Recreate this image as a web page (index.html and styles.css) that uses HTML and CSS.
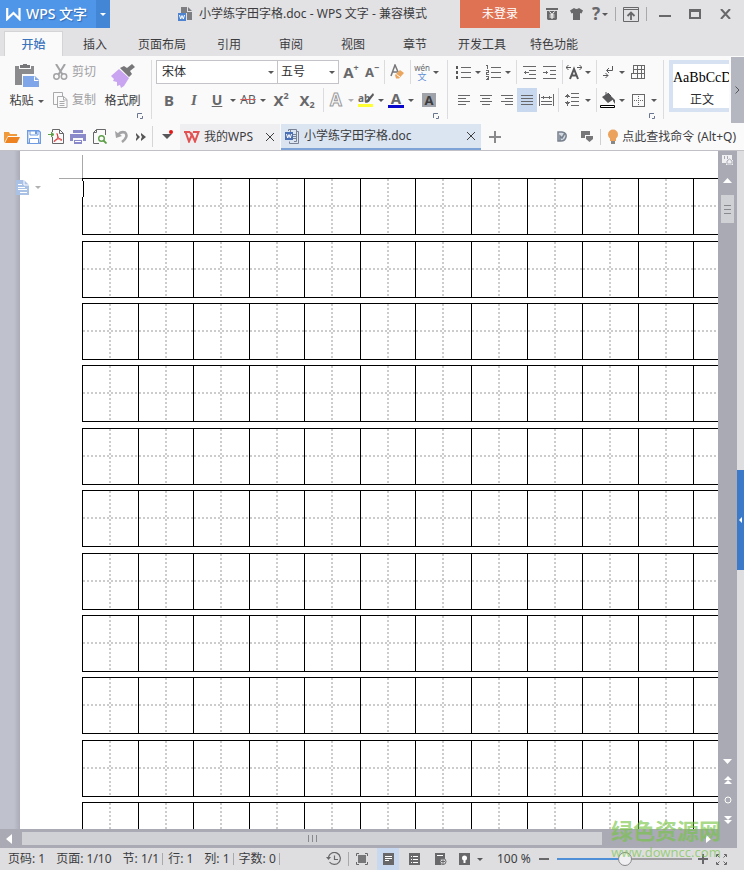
FILE: index.html
```html
<!DOCTYPE html>
<html lang="zh-CN">
<head>
<meta charset="utf-8">
<title>小学练字田字格.doc - WPS 文字</title>
<link rel="stylesheet" href="styles.css">
</head>
<body>
<header class="titlebar">
  <button class="brand"><svg width="15" height="13" viewBox="0 0 15 13"><path d="M1.200 0v11L7.500 5l6 6V0" fill="none" stroke="#fff" stroke-width="2.200"/></svg>WPS 文字</button>
  <button class="brand-menu" aria-label="菜单"><i class="caret"></i></button>
  <div class="doc-title">
    <svg width="15" height="14" viewBox="0 0 15 14"><path d="M3 0h6v5h5v8H9V6H3zM10 0l4 4h-4z" fill="#7d7e82"/><path d="M0 6h8v8H0z" fill="#4d83cf"/><path d="M1.500 8l1.200 4L4 8.500 5.300 12 6.500 8" fill="none" stroke="#fff"/></svg>
    <span>小学练字田字格.doc - WPS 文字 - 兼容模式</span>
  </div>
  <button class="login">未登录</button>
  <div class="window-tools">
    <button class="w24" aria-label="积分"><svg width="12" height="12" viewBox="0 0 12 12"><path d="M0 0h12v2H0zM1 3h10v8l-1 1H2l-1-1z" fill="#68686b"/><path d="M3.500 3.500L6 6.500l2.500-3M6 6v5M3.500 7h5M3.500 9h5" fill="none" stroke="#fff"/></svg></button>
    <button class="w24" aria-label="皮肤"><svg width="13" height="12" viewBox="0 0 13 12"><path d="M4 0q2.500 2 5 0l4 2.500-1.500 3L10 5v7H3V5l-1.500.5L0 2.500z" fill="#68686b"/></svg></button>
    <button class="w24 help" aria-label="帮助">?<i class="caret"></i></button>
    <i class="bar"></i>
    <button class="w24" aria-label="功能区"><svg width="16" height="15" viewBox="0 0 16 15" fill="none" stroke="#68686b"><path d="M.5.5h15v14H.5zM0 2.500h16"/><path d="M8 13V6M4.500 9L8 5.500 11.500 9" stroke-width="1.800"/></svg></button>
    <i class="bar"></i>
    <button class="w30" aria-label="最小化"><svg width="12" height="12"><path d="M0 7h12v2H0z" fill="#68686b"/></svg></button>
    <button class="w30" aria-label="最大化"><svg width="12" height="10"><path d="M1 2h10v7H1zM0 1h12" fill="none" stroke="#68686b" stroke-width="2"/></svg></button>
    <button class="w30" aria-label="关闭"><svg width="11" height="10"><path d="M1 0l9 10M10 0L1 10" stroke="#68686b" stroke-width="2"/></svg></button>
  </div>
</header>

<nav class="menu">
  <button class="active">开始</button><button>插入</button><button class="wide">页面布局</button><button>引用</button><button>审阅</button><button>视图</button><button>章节</button><button class="wide">开发工具</button><button class="wide">特色功能</button>
</nav>

<section class="ribbon">
  <div class="group clipboard">
    <button class="big">
      <svg width="26" height="24" viewBox="0 0 26 24"><path d="M1 2h4v3h12V2h3v8H8v11H1z" fill="#8b8b8e"/><path d="M6 1h3V0h4v1h3v3H6z" fill="#77777a"/><path d="M9 12h12l4 4v7H9z" fill="#7fa6e8"/><path d="M20 12v5h5z" fill="#fff"/><path d="M21 13v3h4z" fill="#7fa6e8"/></svg>
      <span>粘贴<i class="caret"></i></span>
    </button>
    <div class="stack">
      <button><svg width="15" height="16" viewBox="0 0 15 16" fill="none" stroke="#a3a3a6"><path d="M3 0l6.500 10.500M12 0L5.500 10.500" stroke-width="2"/><circle cx="3.500" cy="12.500" r="2.700" stroke-width="1.500"/><circle cx="11" cy="12.500" r="2.700" stroke-width="1.500"/></svg>剪切</button>
      <button><svg width="15" height="16" viewBox="0 0 15 16" fill="none" stroke="#aaaaad"><path d="M4 12.500H.5V.5h9V4"/><path d="M4.500 4.500h6l3.500 3v8H4.500zM10.500 4.500v3.500H14M6.500 9.500h5M6.500 11.500h5M6.500 13.500h5"/></svg>复制</button>
    </div>
    <button class="big">
      <svg width="24" height="24" viewBox="0 0 24 24"><path d="M8 5l10 9-5 8-3 2-1-3-3 1 0-4-4-1 1-2-3-3z" fill="#c9a4f0"/><path d="M9 4l9 9 3-3-2-3 5-4-3-3-5 4-3-2z" fill="#77777a"/></svg>
      <span>格式刷</span>
    </button>
    <svg class="launch" width="6" height="6"><path d="M.5 5V.5H5M3 5.500h2.500V3" fill="none" stroke="#68768f"/></svg>
  </div>

  <div class="group font">
    <div class="row">
      <label class="pick family"><select aria-label="字体"><option>宋体</option></select><i class="caret"></i></label>
      <label class="pick size"><select aria-label="字号"><option>五号</option></select><i class="caret"></i></label>
      <button class="w24 glyph" aria-label="增大字号">A<sup>+</sup></button>
      <button class="w18 glyph small" aria-label="减小字号">A<sup>−</sup></button>
      <i class="sep"></i>
      <button class="w20" aria-label="清除格式"><svg width="15" height="16" viewBox="0 0 15 16"><path d="M1 12L5 1l3.500 8M2.500 8H7" fill="none" stroke="#77777a" stroke-width="1.500"/><path d="M5 11l5-5 4 3-5 5.500-3 0z" fill="#eba55c"/><path d="M6.500 10.500l3.500 2.500" stroke="#fff"/></svg></button>
      <i class="sep"></i>
      <button class="w18 pinyin" aria-label="拼音指南"><span>wén</span><b>文</b></button>
      <button class="w10" aria-label="拼音选项"><i class="caret"></i></button>
    </div>
    <div class="row">
      <button class="w26 glyph">B</button>
      <button class="w24 glyph italic">I</button>
      <button class="w22 glyph under">U</button>
      <button class="w10" aria-label="下划线样式"><i class="caret"></i></button>
      <button class="w20 strike">AB</button>
      <button class="w10" aria-label="删除线样式"><i class="caret"></i></button>
      <button class="w26 glyph">X<sup>2</sup></button>
      <button class="w26 glyph">X<sub>2</sub></button>
      <i class="sep"></i>
      <button class="w20 outline">A</button>
      <button class="w10" aria-label="文字效果"><i class="caret pale"></i></button>
      <button class="w20" aria-label="突出显示"><svg class="mark" width="16" height="16" viewBox="0 0 16 16"><text x="0" y="10">ab</text><path d="M15 1L8 9l-1 2 3-.5L16 3z" fill="#5b5b5e"/><path d="M0 12h15v3H0z" fill="#ff3"/></svg></button>
      <button class="w10" aria-label="突出颜色"><i class="caret"></i></button>
      <button class="ink">A</button>
      <button class="w10" aria-label="字体颜色"><i class="caret"></i></button>
      <button class="w26"><span class="shade">A</span></button>
    </div>
    <svg class="launch" width="6" height="6"><path d="M.5 5V.5H5M3 5.500h2.500V3" fill="none" stroke="#68768f"/></svg>
  </div>

  <div class="group para">
    <div class="row">
      <button class="w20" aria-label="项目符号"><svg class="line" width="15" height="13"><path d="M5 1.500h10M5 6.500h10M5 11.500h10"/><path d="M0 0h2v3H0zM0 5h2v3H0zM0 10h2v3H0z" fill="#58585b" stroke="none"/></svg></button>
      <button class="w10" aria-label="符号样式"><i class="caret"></i></button>
      <button class="w20" aria-label="编号"><svg class="line" width="15" height="15"><path d="M5 2.500h10M5 7.500h10M5 12.500h10M0 .5h1.500V4M0 5.500h2.500v2H.5v2H3M0 11.500h2.500v3H0M1 13h1"/></svg></button>
      <button class="w10" aria-label="编号样式"><i class="caret"></i></button>
      <i class="sep"></i>
      <button class="w20" aria-label="减少缩进"><svg class="line" width="13" height="13"><path d="M0 .5h13M6 4.500h7M6 8.500h7M0 12.500h13M1 6.500h5M2.500 5v3"/></svg></button>
      <button class="w20" aria-label="增加缩进"><svg class="line" width="13" height="13"><path d="M0 .5h13M7 4.500h6M7 8.500h6M0 12.500h13M0 6.500h5M3.500 5v3"/></svg></button>
      <i class="sep"></i>
      <button class="w18" aria-label="中文版式"><svg width="16" height="15" viewBox="0 0 16 15" fill="none" stroke="#58585b"><path d="M4 14L8 4l4 10M5.500 10.500h5" stroke-width="2"/><path d="M0 2.500h5M2.500 0L0 2.500 2.500 5M11 2.500h5M13.500 0L16 2.500 13.500 5"/></svg></button>
      <button class="w10" aria-label="版式选项"><i class="caret"></i></button>
      <i class="sep"></i>
      <button class="w18" aria-label="显示标记"><svg width="11" height="13" viewBox="0 0 11 13" fill="none" stroke="#58585b"><path d="M9.500 0v4.500H4M6 2L3.500 4.500 6 7M0 9.500h5M2.500 7L5 9.500 2.500 12"/></svg></button>
      <button class="w10" aria-label="标记选项"><i class="caret"></i></button>
      <button class="w22" aria-label="表格"><svg class="line" width="14" height="14"><path d="M2.500.5h11v13H.5v-5M2.500 0v9M6.500 0v14M10.500 0v14M2 4.500h12M0 8.500h14"/></svg></button>
    </div>
    <div class="row">
      <button class="w22" aria-label="左对齐"><svg class="line" width="12" height="11"><path d="M0 .5h12M0 3.500h8M0 6.500h12M0 9.500h8"/></svg></button>
      <button class="w22" aria-label="居中"><svg class="line" width="12" height="11"><path d="M0 .5h12M2 3.500h8M0 6.500h12M2 9.500h8"/></svg></button>
      <button class="w20" aria-label="右对齐"><svg class="line" width="12" height="11"><path d="M0 .5h12M4 3.500h8M0 6.500h12M4 9.500h8"/></svg></button>
      <button class="w20 on" aria-label="两端对齐"><svg class="line" width="12" height="11"><path d="M0 .5h12M0 3.500h12M0 6.500h12M0 9.500h12"/></svg></button>
      <button class="w18" aria-label="分散对齐"><svg class="line" width="15" height="12"><path d="M.5 0v12M14.500 0v12M2 3.500h11M4.500 2v3M10.500 2v3M2 7.500h11M2 10.500h11"/></svg></button>
      <i class="sep"></i>
      <button class="w22" aria-label="行距"><svg class="line" width="14" height="14"><path d="M6 .5h8M6 4.500h8M6 8.500h8M6 12.500h8M2.500 1v4M2.500 8v5M1 2.500h3M0 3.500h5M0 9.500h5M1 10.500h3"/></svg></button>
      <button class="w10" aria-label="行距选项"><i class="caret"></i></button>
      <i class="sep"></i>
      <button class="w18" aria-label="底纹"><svg width="16" height="16" viewBox="0 0 16 16"><path d="M2 5l6-4 6 6-6 4zM13 6l2 2v4l-2-3z" fill="#58585b"/><path d="M6 0v4M8 1l3 3" stroke="#58585b"/><path d="M.5 13.500h14v2H.5z" fill="#fff" stroke="#000"/></svg></button>
      <button class="w10" aria-label="底纹颜色"><i class="caret"></i></button>
      <button class="w22" aria-label="边框"><svg class="line" width="13" height="13"><path d="M.5.5h12v12H.5z"/><path d="M6.500 2v9M2 6.500h9" stroke-dasharray="1 1"/></svg></button>
      <button class="w10" aria-label="边框样式"><i class="caret"></i></button>
    </div>
    <svg class="launch" width="6" height="6"><path d="M.5 5V.5H5M3 5.500h2.500V3" fill="none" stroke="#68768f"/></svg>
  </div>

  <div class="styles"><button><b>AaBbCcD</b><span>正文</span></button></div>
  <button class="more" aria-label="更多"><svg width="5" height="8"><path d="M.5.5L4 4 .5 7.500" fill="none" stroke="#55565c"/></svg></button>
</section>

<section class="quick">
  <div class="quick-icons">
    <button aria-label="打开"><svg width="16" height="14" viewBox="0 0 16 14"><path d="M0 13V2h5l1 2h7v2H4z" fill="#f09a3c"/><path d="M4 7h12l-3 6H1z" fill="#ee8322"/></svg></button>
    <button aria-label="保存"><svg width="14" height="14" viewBox="0 0 14 14"><path d="M.7.7h11l1.600 1.600v11H.7z" fill="#fff" stroke="#6f9be0" stroke-width="1.400"/><path d="M3 1h8v4H3zM2.500 8.500h9v5h-9z" fill="#fff" stroke="#6f9be0"/><path d="M8 1h2v3H8z" fill="#6f9be0"/></svg></button>
    <button aria-label="输出PDF"><svg width="16" height="15" viewBox="0 0 16 15"><path d="M4.500 3V.5h7l4 4v10h-11V8M11.500.5v4h4" fill="none" stroke="#68686b"/><path d="M0 5.500h4M3 3l3 2.500L3 8" fill="#5f9f4a" stroke="#5f9f4a"/><path d="M9 4.500c2 4-1 8-3 8 0-2 7-4 8-1.500-1 1.500-4-2-5-6.500z" fill="none" stroke="#dc3c3c"/></svg></button>
    <button aria-label="打印"><svg width="16" height="14" viewBox="0 0 16 14"><path d="M3 0h10v3H3zM0 4h16v7h-3V8H3v3H0zM4 10h8v4H4z" fill="#8a8acb"/><path d="M5 11.500h6" stroke="#fff"/></svg></button>
    <button aria-label="打印预览"><svg width="14" height="15" viewBox="0 0 14 15"><path d="M12.500 6V.5H3.500l-3 3v11H6M.5 3.500h3v-3" fill="none" stroke="#68686b"/><circle cx="8.500" cy="9.500" r="2.800" fill="none" stroke="#5f9f4a" stroke-width="1.400"/><path d="M10.500 11.500l3 3" stroke="#5f9f4a" stroke-width="1.800"/></svg></button>
    <button aria-label="撤销"><svg width="14" height="13" viewBox="0 0 14 13"><path d="M3 5q3-4 7-2.500 4 4-3 9.500" fill="none" stroke="#a3a3a6" stroke-width="2.600"/><path d="M0 1l1 7 6-2z" fill="#a3a3a6"/></svg></button>
    <button class="tight" aria-label="更多命令"><svg width="10" height="8"><path d="M0 0l4 4-4 4V6l1-2-1-2zM5 0l5 4-5 4V6l1-2-1-2z" fill="#555"/></svg></button>
  </div>
  <button class="recent" aria-label="历史"><i class="caret large"></i><i class="dot"></i></button>
  <div class="tab"><svg width="16" height="12" viewBox="0 0 16 12"><path d="M0 1h6M1.500 1l3.500 9.500 3-7 3 7L14.500 1H9M6 1l2.500 5" fill="none" stroke="#e25252" stroke-width="2"/></svg><span>我的WPS</span><button aria-label="关闭标签"><svg width="8" height="8"><path d="M0 0l8 8M8 0L0 8" stroke="#3f3f42"/></svg></button></div>
  <div class="tab current"><svg width="15" height="15" viewBox="0 0 15 15"><path d="M3.500 2V.5h8v12H9M5.500 3V1M11.500 2.500h2v12h-9v-2M8 5.500h3M8 7.500h3M8 9.500h3" fill="none" stroke="#7a8296"/><path d="M0 3h8v8H0z" fill="#4a6fb5"/><path d="M1.500 5l1.200 4L4 5.500 5.300 9l1.200-4" fill="none" stroke="#fff"/></svg><span>小学练字田字格.doc</span><button aria-label="关闭标签"><svg width="8" height="8"><path d="M0 0l8 8M8 0L0 8" stroke="#3f3f42"/></svg></button></div>
  <button class="new" aria-label="新建"><svg width="12" height="12"><path d="M5 0h2v12H5zM0 5h12v2H0z" fill="#8a8a8d"/></svg></button>
  <div class="quick-end">
    <button aria-label="云文档"><svg width="10" height="11" viewBox="0 0 10 11"><path d="M1 1h4q5 1 4 5-1 4-5 4H1z" fill="#d5dae2" stroke="#77808e" stroke-width="1.500"/><path d="M3 10V5l2 2 3-5" fill="none" stroke="#77808e" stroke-width="1.500"/></svg></button>
    <button aria-label="窗口切换"><svg width="12" height="11"><path d="M0 0h9v4H4v3H0z" fill="#77777a"/><path d="M5 5h7v3L8.500 11 5 8z" fill="#77777a"/></svg></button>
    <a class="find" href="#"><svg width="12" height="16" viewBox="0 0 12 16"><circle cx="6" cy="5.500" r="5" fill="#eba25c"/><path d="M3 8h6v4H3z" fill="#eba25c"/><path d="M4 12h4v3H4z" fill="#888"/></svg>点此查找命令 (Alt+Q)</a>
  </div>
</section>

<main class="work">
  <div class="view">
    <div class="canvas">
      <article class="paper">
        <div class="corner"></div>
        <div class="sheet" id="sheet"></div>
        <i class="cursor"></i>
      </article>
      <div class="note"><svg width="13" height="15" viewBox="0 0 13 15"><path d="M0 0h8l5 5v10H0z" fill="#a9c1e4"/><path d="M8 0v5h5M2 4.500h4M2 7.500h7M2 9.500h9M4 12.500h7" fill="none" stroke="#fff"/></svg><i class="caret pale"></i></div>
    </div>
    <div class="vscroll">
      <svg width="11" height="11"><path d="M0 0h10v5h1v5H4V8H0z" fill="#f0f0f2"/><path d="M2.500 1v3M5.500 1v3M5 9V6l2.500-2L10 6v3z" fill="none" stroke="#a9aab3"/></svg>
      <svg width="9" height="5"><path d="M0 5l4.500-5L9 5z" fill="#fff"/></svg>
      <div class="thumb"><i></i><i></i><i></i></div>
      <div class="jump">
        <svg width="9" height="5"><path d="M0 0h9L4.500 5z" fill="#fff"/></svg>
        <svg width="8" height="8"><path d="M0 4l4-4 4 4zM0 8l4-4 4 4z" fill="#fff"/></svg>
        <svg width="8" height="8"><circle cx="4" cy="4" r="3" fill="none" stroke="#fff"/></svg>
        <svg width="8" height="8"><path d="M0 0h8L4 4zM0 4h8L4 8z" fill="#fff"/></svg>
      </div>
    </div>
    <div class="hscroll">
      <svg width="6" height="10"><path d="M6 0v10L0 5z" fill="#fff"/></svg>
      <div class="track"><i></i><i></i><i></i></div>
      <div class="rest"><svg width="5" height="8"><path d="M0 0v8l5-4z" fill="#fff"/></svg></div>
    </div>
  </div>
  <aside class="side"><button aria-label="展开任务窗格"><svg width="3" height="6"><path d="M3 0v6L0 3z" fill="#fff"/></svg></button></aside>
</main>

<footer class="status">
  <div class="facts">
    <span>页码: 1</span><span>页面: 1/10</span><span class="end">节: 1/1</span><span>行: 1</span><span class="end">列: 1</span><span class="end">字数: 0</span>
  </div>
  <div class="views">
    <button class="w30" aria-label="历史版本"><svg width="15" height="14" viewBox="0 0 15 14" fill="none" stroke="#68686b"><path d="M2.500 5a6 6 0 1 1 1 5M8.500 3.500V7.500H12" stroke-width="1.200"/><path d="M0 5h5L2.500 8z" fill="#68686b" stroke="none"/></svg></button>
    <i class="bar"></i>
    <button class="w26" aria-label="全屏"><svg width="12" height="12"><path d="M.5 3V.5H3M9 .5h2.500V3M11.500 9v2.500H9M3 11.500H.5V9" fill="none" stroke="#68686b"/><path d="M2 2h8v8H2z" fill="#77777a"/></svg></button>
    <button class="w22 on page" aria-label="页面视图"><svg width="11" height="12"><path d="M0 0h11v12H0z" fill="#68686b"/><path d="M2 3.500h7M2 5.500h7M2 7.500h4" stroke="#fff"/></svg></button>
    <button class="w30" aria-label="大纲视图"><svg width="11" height="12"><path d="M0 0h11v12H0z" fill="#68686b"/><path d="M2 3.500h1M4 3.500h5M2 6.500h1M4 6.500h5M2 9.500h1M4 9.500h5" stroke="#fff"/></svg></button>
    <button class="w24" aria-label="Web视图"><svg width="12" height="12"><path d="M0 0h10v6H6v6H0z" fill="#68686b"/><path d="M2 2.500h6" stroke="#fff"/><circle cx="8" cy="8.500" r="3" fill="#dedee0" stroke="#68686b"/><path d="M6 8.500h4M8 6v5" stroke="#68686b"/></svg></button>
    <button class="w22" aria-label="护眼模式"><svg width="11" height="12"><path d="M0 0h11v12H0z" fill="#68686b"/><circle cx="5.500" cy="5" r="2.500" fill="#fff"/><path d="M4.500 7h2v3h-2z" fill="#fff"/></svg></button>
    <button class="w10" aria-label="护眼选项"><i class="caret"></i></button>
    <span class="percent">100 %</span>
    <button class="w22" aria-label="缩小"><svg width="10" height="2"><path d="M0 0h10v2H0z" fill="#68686b"/></svg></button>
    <input class="zoom" type="range" min="0" max="200" value="100" aria-label="显示比例">
    <button class="w18" aria-label="放大"><svg width="10" height="10"><path d="M4 0h2v10H4zM0 4h10v2H0z" fill="#68686b"/></svg></button>
    <button class="w18" aria-label="适合窗口"><svg width="11" height="11" fill="none" stroke="#68686b"><path d="M.5 3V.5H3M8 .5h2.500V3M10.500 8v2.500H8M3 10.500H.5V8M1 1l2.500 2.500M10 1L7.500 3.500M1 10l2.500-2.500M10 10L7.500 7.500"/></svg></button>
  </div>
  <div class="watermark"><b>绿色资源网</b><span>www.downcc.com</span></div>
</footer>
<script src="sheet.js"></script>
</body>
</html>
```
FILE: sheet.js
```js
// Fills the page with rows of practice squares.
const ROWS = 11;
const COLUMNS = 12;
const sheet = document.getElementById('sheet');
for (let r = 0; r < ROWS; r++) {
  const row = document.createElement('div');
  row.className = 'squares';
  for (let c = 0; c < COLUMNS; c++) {
    row.appendChild(document.createElement('i'));
  }
  sheet.appendChild(row);
}
```
FILE: styles.css
```css
* { box-sizing: border-box; }
body {
  margin: 0;
  height: 100vh;
  display: flex;
  flex-direction: column;
  overflow: hidden;
  background: #dedee0;
  color: #3c3c3f;
  font: 12px/16px "Noto Sans", "Noto Sans CJK SC", sans-serif;
}
button {
  display: flex;
  align-items: center;
  justify-content: center;
  flex: none;
  margin: 0;
  padding: 0;
  border: 0;
  background: none;
  color: inherit;
  font: inherit;
  white-space: nowrap;
}
svg { display: block; flex: none; }
.w10 { width: 10px; }
.w18 { width: 18px; }
.w20 { width: 20px; }
.w22 { width: 22px; }
.w24 { width: 24px; }
.w26 { width: 26px; }
.w30 { width: 30px; }
.caret {
  flex: none;
  border: 3px solid transparent;
  border-top-color: #58585b;
  border-bottom: 0;
}
.caret.pale { border-top-color: #b0b0b3; }
.caret.large { border-width: 5px 5px 0; }
.bar { width: 1px; height: 14px; background: #a9a9ac; }
.on { background: #c8d9ef; }

/* Title bar */
.titlebar { display: flex; flex: none; height: 28px; background: #e2e2e4; }
.brand {
  justify-content: flex-start;
  width: 96px;
  gap: 5px;
  padding-left: 6px;
  background: #4f96e8;
  color: #fff;
  font-size: 14px;
  font-weight: 500;
  text-shadow: 1px 1px 1px #2f6ab5;
}
.brand-menu { width: 14px; background: #4486d6; }
.brand-menu .caret { border-top-color: #fff; }
.doc-title {
  display: flex;
  flex: 1;
  align-items: center;
  gap: 6px;
  min-width: 0;
  padding-left: 68px;
  white-space: nowrap;
}
.login { width: 80px; background: #e07254; color: #fff; }
.window-tools { display: flex; align-items: center; height: 28px; padding-right: 4px; }
.window-tools .bar { margin: 0 3px; }
.help { gap: 2px; font-size: 17px; font-weight: 700; color: #68686b; }

/* Menu */
.menu { display: flex; flex: none; height: 28px; padding: 3px 0 0 4px; background: #e2e2e4; }
.menu button { width: 62px; padding-top: 2px; }
.menu .wide { width: 72px; }
.menu .active {
  width: 59px;
  margin-right: 1px;
  border: 1px solid #d4d4d7;
  border-bottom: 0;
  background: #fafafa;
  color: #3a74bd;
  font-weight: 500;
}

/* Ribbon */
.ribbon { display: flex; flex: none; height: 67px; background: #fafafa; }
.group { position: relative; margin-top: 4px; height: 59px; border-right: 1px solid #dcdcdf; }
.launch { position: absolute; right: 8px; bottom: 0; }
.clipboard { display: flex; gap: 6px; width: 152px; padding-left: 6px; }
.big { flex-direction: column; justify-content: flex-start; gap: 5px; width: 41px; padding-top: 4px; }
.big span { display: flex; align-items: center; gap: 4px; }
.stack { display: grid; grid-auto-rows: 28px; height: 56px; margin-top: -2px; }
.stack button { gap: 4px; color: #a0a0a3; }
.font { width: 296px; padding-left: 4px; }
.para { width: 216px; padding-left: 5px; }
.row { display: flex; height: 24px; margin-bottom: 4px; }
.sep { flex: none; width: 6px; background: linear-gradient(90deg, transparent 3px, #dcdcdf 3px 4px, transparent 4px); }
.pick { display: grid; align-items: center; flex: none; }
.pick > * { grid-area: 1 / 1; }
.pick .caret { justify-self: end; margin-right: 4px; pointer-events: none; }
.pick select {
  width: 100%;
  height: 24px;
  padding: 0 5px;
  appearance: none;
  border: 1px solid #c4c4c8;
  border-radius: 0;
  background: #fff;
  color: #2c2c2f;
  font: inherit;
}
.family { width: 122px; }
.size { width: 62px; margin-left: -1px; }
.size select { padding: 0 3px; }
.glyph { color: #68686b; font-size: 15px; font-weight: 700; }
.glyph sup, .glyph sub { font-size: 9px; line-height: 9px; }
.glyph sup { align-self: flex-start; margin-top: 3px; }
.glyph sub { align-self: flex-end; margin-bottom: 3px; }
.small { font-size: 13px; }
.italic { font-family: "Liberation Serif", serif; font-style: italic; }
.under { text-decoration: underline; font-size: 14px; }
.strike { color: #58585b; text-decoration: line-through #d65a5a; }
.outline { color: #fafafa; font-size: 17px; font-weight: 700; -webkit-text-stroke: 1px #9a9a9d; }
.mark { overflow: visible; }
.mark text { fill: #68686b; font-size: 10px; font-weight: 700; }
.ink {
  align-self: center;
  width: 16px;
  height: 16px;
  margin: 0 2px;
  padding-bottom: 4px;
  background: linear-gradient(#0808cc, #0808cc) bottom / 100% 3px no-repeat;
  color: #68686b;
  font-size: 15px;
  font-weight: 700;
}
.shade { width: 14px; height: 14px; line-height: 14px; background: #a0a3a9; font-size: 13px; font-weight: 700; }
.pinyin { flex-direction: column; color: #68686b; font-size: 8px; line-height: 9px; }
.pinyin b { color: #5f8fd6; font-size: 9px; font-weight: 400; line-height: 10px; }
.line { fill: none; stroke: #68686b; shape-rendering: crispEdges; }
.styles { flex: 1; min-width: 0; margin: 4px 2px 0 5px; height: 52px; overflow: hidden; }
.styles button {
  flex-direction: column;
  align-items: flex-start;
  justify-content: flex-start;
  width: 76px;
  height: 52px;
  gap: 5px;
  padding-top: 5px;
  border: 4px solid #d6e1f1;
  background: #fff;
  color: #2c2c2f;
}
.styles b { color: #000; font: 14px/18px "Liberation Serif", serif; }
.styles span { width: 58px; text-align: center; }
.more { width: 13px; margin-top: 1px; background: #b5b7c0; }

/* Quick access and document tabs */
.quick { display: flex; flex: none; height: 28px; background: #fafafa; border-bottom: 1px solid #c0c0c6; }
.quick-icons { display: flex; align-items: center; border-right: 1px solid #d6d6d9; margin: 3px 0; width: 153px; padding-left: 1px; }
.quick-icons button { width: 22px; }
.quick-icons .tight { width: 16px; }
.recent { position: relative; width: 27px; }
.dot { position: absolute; top: 7px; right: 7px; width: 4px; height: 4px; border-radius: 50%; background: #e01818; }
.tab { display: flex; align-items: center; flex: none; gap: 4px; width: 100px; margin: 1px 1px 0 0; padding: 0 6px 0 4px; background: #efeff1; }
.tab span { flex: 1; white-space: nowrap; }
.tab.current { width: 200px; border-bottom: 2px solid #7ea3d6; background: #dbe5f1; }
.new { width: 26px; }
.quick-end { display: flex; align-items: center; gap: 7px; margin-left: auto; padding-right: 8px; }
.quick-end button:first-child { margin-right: 7px; }
.find { display: flex; align-items: center; gap: 3px; padding-left: 6px; border-left: 1px solid #d0d0d3; color: inherit; text-decoration: none; white-space: nowrap; }

/* Document area */
.work { display: flex; flex: 1; min-height: 0; }
.view { display: grid; flex: 1; min-width: 0; grid-template: minmax(0, 1fr) 19px / minmax(0, 1fr) 19px; }
.canvas {
  position: relative;
  overflow: hidden;
  padding-left: 20px;
  background: linear-gradient(90deg, #bfc2cc 14px, #a9abb8 20px);
}
.paper { position: relative; height: 100%; overflow: hidden; background: #fff; }
.corner { width: 24px; height: 24px; margin: 4px 0 0 39px; border: solid #a8a8a8; border-width: 0 1px 1px 0; }
.sheet { margin: -1px 0 0 62px; width: 667px; }
.squares {
  display: grid;
  grid-template-columns: repeat(12, 1fr);
  height: 57px;
  margin-bottom: 5px;
  border: 1px solid #000;
  border-width: 1px 0;
}
.squares:nth-child(1), .squares:nth-child(4), .squares:nth-child(6), .squares:nth-child(9) { margin-bottom: 6px; }
.squares i {
  border-left: 1px solid #000;
  background:
    repeating-linear-gradient(#ccc 0 2px, transparent 2px 4px) 26px 0 / 2px 100% no-repeat,
    repeating-linear-gradient(90deg, #ccc 0 2px, transparent 2px 4px) 0 26px / 100% 2px no-repeat;
}
.cursor { position: absolute; left: 62px; top: 30px; width: 2px; height: 16px; border-left: 1px solid #fff; background: #000; }
.note { position: absolute; left: 16px; top: 29px; display: flex; align-items: center; gap: 6px; }
.vscroll { display: flex; flex-direction: column; align-items: center; gap: 12px; padding: 4px 0 5px; background: #a9aab3; }
.thumb { display: flex; flex-direction: column; align-items: center; justify-content: center; gap: 3px; width: 13px; height: 28px; background: #d0d1d5; }
.thumb i { width: 7px; height: 1px; background: #88898f; }
.jump { display: flex; flex-direction: column; align-items: center; gap: 12px; margin-top: auto; }
.hscroll { grid-column: span 2; display: flex; align-items: center; gap: 10px; padding: 0 26px 0 6px; background: #a9aab3; }
.track { display: flex; flex: 580; align-items: center; justify-content: center; gap: 3px; height: 13px; background: #d0d1d5; }
.track i { width: 1px; height: 7px; background: #88898f; }
.rest { display: flex; flex: 99; justify-content: flex-end; }
.side { flex: none; width: 7px; background: #dedee0; }
.side button { width: 7px; height: 100px; margin-top: 319px; background: #3c79c9; }

/* Status bar */
.status { position: relative; display: flex; align-items: center; flex: none; height: 22px; padding-left: 8px; background: #dedee0; }
.facts { display: flex; align-items: center; gap: 11px; white-space: nowrap; }
.facts .end { height: 12px; margin-right: -6px; padding-right: 3px; border-right: 1px solid #a9a9ac; line-height: 12px; }
.views { display: flex; align-items: center; margin-left: auto; padding-right: 14px; }
.views button { height: 22px; }
.views .page { margin-left: 2px; }
.percent { width: 36px; margin-left: 12px; }
.zoom {
  width: 135px;
  height: 16px;
  margin: 0 2px;
  appearance: none;
  background: linear-gradient(90deg, #4f8fd8 50%, #a0a0a3 50%) center / 100% 2px no-repeat;
}
.zoom::-webkit-slider-thumb { appearance: none; width: 14px; height: 14px; border: 1px solid #88888b; border-radius: 50%; background: #f0f0f2; }
.watermark {
  position: absolute;
  right: 23px;
  bottom: 9px;
  display: flex;
  flex-direction: column;
  align-items: center;
  color: rgba(116, 196, 68, .65);
  pointer-events: none;
}
.watermark b { font-size: 22px; line-height: 26px; }
.watermark span { font-size: 13px; line-height: 18px; }
```
